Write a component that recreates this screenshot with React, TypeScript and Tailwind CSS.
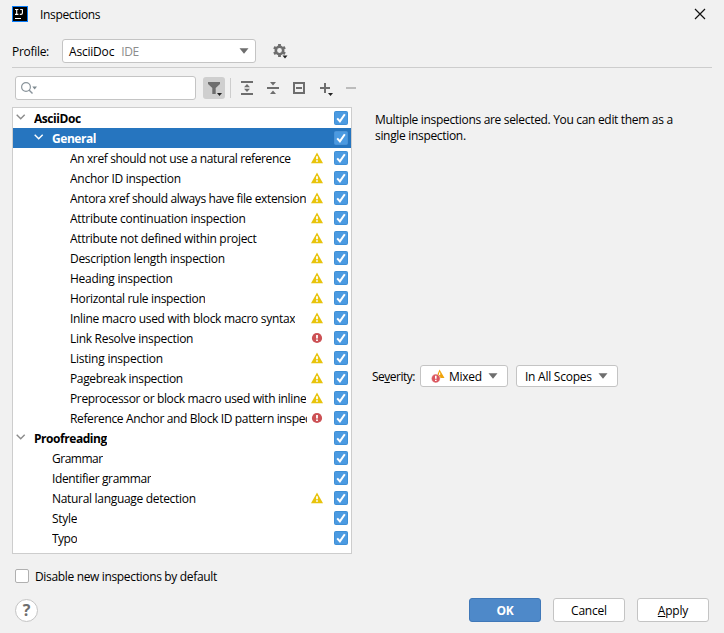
import type { ReactNode } from "react";

type Level = "warning" | "error" | null;
type Row = { label: string; depth: number; open?: boolean; level?: Level; tracking: string };

const rows: Row[] = [
  { label: "AsciiDoc", depth: 0, open: true, tracking: "tracking-[-0.45px]" },
  { label: "General", depth: 1, open: true, tracking: "tracking-[-0.45px]" },
  { label: "An xref should not use a natural reference", depth: 3, level: "warning", tracking: "tracking-[-0.37px]" },
  { label: "Anchor ID inspection", depth: 3, level: "warning", tracking: "tracking-[-0.27px]" },
  { label: "Antora xref should always have file extension", depth: 3, level: "warning", tracking: "tracking-[-0.36px]" },
  { label: "Attribute continuation inspection", depth: 3, level: "warning", tracking: "tracking-[-0.28px]" },
  { label: "Attribute not defined within project", depth: 3, level: "warning", tracking: "tracking-[-0.3px]" },
  { label: "Description length inspection", depth: 3, level: "warning", tracking: "tracking-[-0.3px]" },
  { label: "Heading inspection", depth: 3, level: "warning", tracking: "tracking-[-0.27px]" },
  { label: "Horizontal rule inspection", depth: 3, level: "warning", tracking: "tracking-[-0.34px]" },
  { label: "Inline macro used with block macro syntax", depth: 3, level: "warning", tracking: "tracking-[-0.31px]" },
  { label: "Link Resolve inspection", depth: 3, level: "error", tracking: "tracking-[-0.29px]" },
  { label: "Listing inspection", depth: 3, level: "warning", tracking: "tracking-[-0.24px]" },
  { label: "Pagebreak inspection", depth: 3, level: "warning", tracking: "tracking-[-0.36px]" },
  { label: "Preprocessor or block macro used with inline", depth: 3, level: "warning", tracking: "tracking-[-0.36px]" },
  { label: "Reference Anchor and Block ID pattern inspec", depth: 3, level: "error", tracking: "tracking-[-0.36px]" },
  { label: "Proofreading", depth: 0, open: true, tracking: "tracking-[-0.45px]" },
  { label: "Grammar", depth: 2, tracking: "tracking-[-0.5px]" },
  { label: "Identifier grammar", depth: 2, tracking: "tracking-[-0.36px]" },
  { label: "Natural language detection", depth: 2, level: "warning", tracking: "tracking-[-0.31px]" },
  { label: "Style", depth: 2, tracking: "tracking-[-0.3px]" },
  { label: "Typo", depth: 2, tracking: "tracking-[-0.5px]" },
];

const indents = ["pl-0", "pl-[18px]", "pl-[39px]", "pl-[57px]"];

function Warning() {
  return (
    <svg width="12" height="12" viewBox="0 0 12 12">
      <path d="M6 .5 12 11.2H0Z" fill="#e8c30b" />
      <path d="M5.1 4.2h1.8v3H5.1zM5.1 8.2h1.8v1.6H5.1z" fill="#fff" />
    </svg>
  );
}

function ErrorMark() {
  return (
    <svg width="12" height="12" viewBox="0 0 12 12">
      <circle cx="6" cy="6" r="5.1" fill="#cc5155" />
      <path d="M5.1 3h1.8v3.6H5.1zM5.1 7.4h1.8V9H5.1z" fill="#fff" />
    </svg>
  );
}

function Check({ selected }: { selected: boolean }) {
  return (
    <svg width="14" height="14" viewBox="0 0 14 14">
      <rect x=".5" y=".5" width="13" height="13" rx="1" fill="#4b9ae1" stroke={selected ? "#4b93d6" : "#3f8fd6"} />
      <path d="m3.2 7.4 2.7 3 4.9-7.2" fill="none" stroke="#fff" strokeWidth="2" />
    </svg>
  );
}

function Chevron({ light }: { light: boolean }) {
  return (
    <svg width="10" height="6" viewBox="0 0 10 6" className="mb-0.5">
      <path d="m.7.8 4 4 4-4" fill="none" stroke={light ? "#fff" : "#8c8c8c"} strokeWidth="1.4" />
    </svg>
  );
}

function Arrow() {
  return (
    <svg width="10" height="6" viewBox="0 0 10 6" className="shrink-0">
      <path d="M.5.3h9L5 5.7Z" fill="#6e6e6e" />
    </svg>
  );
}

function Tool({ children }: { children: ReactNode }) {
  return (
    <svg width="18" height="18" viewBox="0 0 18 18" fill="none" stroke="#6e6e6e" strokeWidth="2" className="shrink-0">
      {children}
    </svg>
  );
}

function TreeRow({ row }: { row: Row }) {
  const selected = row.label === "General";
  return (
    <div className={`flex h-5 items-center ${selected ? "bg-[#2675bf] text-white" : ""}`}>
      <div className={`flex w-[294px] min-w-0 items-center ${indents[row.depth]}`}>
        {row.open && (
          <span className="flex w-[21px] shrink-0 pl-[3px]">
            <Chevron light={selected} />
          </span>
        )}
        <span
          className={`h-5 overflow-hidden whitespace-nowrap pt-px leading-5 ${row.tracking} ${row.open ? "font-bold" : ""}`}
        >
          {row.label}
        </span>
      </div>
      <span className="ml-1 flex w-[23px]">
        {row.level === "warning" && <Warning />}
        {row.level === "error" && <ErrorMark />}
      </span>
      <Check selected={selected} />
    </div>
  );
}

export default function App() {
  return (
    <div className="flex h-[633px] w-[724px] flex-col overflow-hidden bg-[#f1f1f1] font-['Open_Sans','Noto_Sans',sans-serif] text-[12px] leading-4 tracking-[-0.2px] text-black">
      <header className="flex h-[30px] items-center pl-3 pr-[18px]">
        <svg width="16" height="16" viewBox="0 0 16 16" className="mb-0.5">
          <path d="M0 0h16v16H0z" fill="#087cfa" />
          <path d="M1 1h14v14H1z" fill="#000" />
          <path d="M3 3.5h3.4M4.7 3.5v5M3 8.4h3.4M8.2 3.5h2.6M10.4 3.5v3.6Q10.4 8.4 9 8.4H7.8" fill="none" stroke="#fff" strokeWidth="1.1" />
          <path d="M3 12h6v1H3z" fill="#fff" />
        </svg>
        <h1 className="ml-3 flex-1 tracking-[-0.33px]">Inspections</h1>
        <svg width="12" height="12" viewBox="0 0 12 12" className="mb-0.5">
          <path d="m1 1 10 10M11 1 1 11" stroke="#111" strokeWidth="1.2" />
        </svg>
      </header>

      <div className="mx-3 flex h-[38px] items-center border-b border-[#cdcdcd] pb-px pt-1.5">
        <span className="w-[50px] pt-0.5 tracking-[-0.3px]">Profile:</span>
        <div className="flex h-6 w-[194px] items-center rounded-[3px] border border-[#c4c4c4] bg-white pl-1.5 pr-1.5">
          <span className="pt-0.5">AsciiDoc</span>
          <span className="ml-[7px] flex-1 pt-0.5 tracking-[-0.4px] text-[#8c8c8c]">IDE</span>
          <Arrow />
        </div>
        <svg width="18" height="18" viewBox="0 0 18 18" className="ml-4 mt-0.5">
          <g stroke="#6e6e6e" fill="none">
            <circle cx="7.5" cy="7.5" r="3.7" strokeWidth="2.6" />
            <path d="M7.5 1v2.5M7.5 11.5V14M1.9 4.2l2 1.2M11.1 9.6l2 1.2M1.9 10.8l2-1.2M11.1 5.4l2-1.2" strokeWidth="2.8" />
          </g>
          <path d="M10.5 12.5h5L13 15.5Z" fill="#222" />
        </svg>
      </div>

      <div className="flex h-[39px] items-center pl-[15px]">
        <div className="flex h-6 w-[181px] items-center rounded-[3px] border border-[#c4c4c4] bg-white pl-[5px]">
          <svg width="17" height="14" viewBox="0 0 17 14" fill="none">
            <circle cx="5" cy="6" r="4.4" stroke="#8a949b" strokeWidth="1.2" />
            <path d="m8 9 3.5 3.5" stroke="#8a949b" strokeWidth="1.4" />
            <path d="M11.3 5.5h4.7l-2.35 3Z" fill="#7f8b91" />
          </svg>
        </div>
        <div className="ml-[7px] flex size-[22px] items-center justify-center rounded-[3px] bg-[#cfcfcf]">
          <Tool>
            <path d="M3 3h12v2l-4.3 4v6H7.3V9L3 5Z" fill="#6e6e6e" stroke="none" />
            <path d="M12 14h5l-2.5 3Z" fill="#222" stroke="none" />
          </Tool>
        </div>
        <div className="ml-[5px] mr-[7px] h-5 w-px bg-[#cdcdcd]" />
        <div className="flex gap-2">
          <Tool>
            <path d="M3 3h12M3 15h12" />
            <path d="M6 8.3h6L9 5ZM6 9.7h6L9 13Z" fill="#6e6e6e" stroke="none" />
          </Tool>
          <Tool>
            <path d="M3 9h12" />
            <path d="M6 3h6L9 6.5ZM6 15h6l-3-3.5Z" fill="#6e6e6e" stroke="none" />
          </Tool>
          <Tool>
            <path d="M4 4h10v10H4zM6 9h6" />
          </Tool>
          <Tool>
            <path d="M4 9h10M9 4v10" />
            <path d="M12 14h5l-2.5 3Z" fill="#222" stroke="none" />
          </Tool>
          <Tool>
            <path d="M4 9h10" stroke="#bcbcbc" />
          </Tool>
        </div>
      </div>

      <main className="flex h-[447px] px-3">
        <div className="w-[340px] border border-[#cdcdcd] bg-white">
          {rows.map((row) => (
            <TreeRow key={row.label} row={row} />
          ))}
        </div>
        <section className="flex flex-1 flex-col pl-5">
          <p className="h-[258px] w-[316px] pl-[3px] pt-[5px] tracking-[-0.32px]">
            Multiple inspections are selected. You can edit them as a single inspection.
          </p>
          <div className="flex h-[22px] items-center">
            <span className="w-12 whitespace-nowrap pt-0.5 tracking-[-0.5px]">
              Se<span className="underline">v</span>erity:
            </span>
            <div className="flex h-[22px] w-[88px] items-center rounded-[3px] border border-[#c4c4c4] bg-white pl-2.5 pr-[9px]">
              <svg width="14" height="15" viewBox="0 0 14 15">
                <path d="M8.5.5 13.5 9H5Z" fill="#f0a30a" />
                <path d="M8 3.5h1.2V6H8z" fill="#fff" />
                <circle cx="4.8" cy="9.5" r="4.4" fill="#db5860" stroke="#fff" strokeWidth=".5" />
                <path d="M4 6.7h1.6v3.1H4zM4 10.7h1.6V12H4z" fill="#fff" />
              </svg>
              <span className="ml-1 flex-1 pt-0.5 tracking-[-0.3px]">Mixed</span>
              <Arrow />
            </div>
            <div className="ml-2 flex h-[22px] w-[102px] items-center rounded-[3px] border border-[#c4c4c4] bg-white pl-2 pr-[9px]">
              <span className="flex-1 whitespace-nowrap pt-0.5 tracking-[-0.25px]">In All Scopes</span>
              <Arrow />
            </div>
          </div>
        </section>
      </main>

      <label className="flex h-[44px] items-center pl-[15px]">
        <span className="size-3.5 rounded-[2px] border border-[#b0b0b0] bg-white" />
        <span className="ml-1.5 pt-0.5 tracking-[-0.34px]">Disable new inspections by default</span>
      </label>

      <footer className="flex h-6 items-center pl-[15px]">
        <div className="flex size-[23px] items-center justify-center rounded-full border border-[#c4c4c4] bg-white text-[16px] font-bold text-[#6e6e6e]">
          ?
        </div>
        <button className="ml-auto h-6 w-[72px] rounded-[3px] border border-[#4078b8] bg-[#4e89c9] pt-0.5 font-bold text-white">OK</button>
        <button className="ml-3 h-6 w-[72px] rounded-[3px] border border-[#c4c4c4] bg-white pt-0.5">Cancel</button>
        <button className="ml-3 mr-[15px] h-6 w-[72px] rounded-[3px] border border-[#c4c4c4] bg-white pt-0.5">
          <span className="underline">A</span>pply
        </button>
      </footer>
    </div>
  );
}
